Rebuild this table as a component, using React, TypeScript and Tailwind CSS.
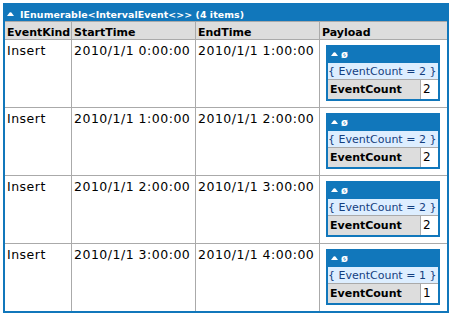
import React from "react";

type IntervalRow = { kind: string; start: string; end: string; count: number };

const rows: IntervalRow[] = [
  { kind: "Insert", start: "2010/1/1 0:00:00", end: "2010/1/1 1:00:00", count: 2 },
  { kind: "Insert", start: "2010/1/1 1:00:00", end: "2010/1/1 2:00:00", count: 2 },
  { kind: "Insert", start: "2010/1/1 2:00:00", end: "2010/1/1 3:00:00", count: 2 },
  { kind: "Insert", start: "2010/1/1 3:00:00", end: "2010/1/1 4:00:00", count: 1 },
];

const FONT = "font-['DejaVu_Sans',Verdana,sans-serif]";

function Caret() {
  return (
    <svg width="7" height="4" viewBox="0 0 7 4" className="block shrink-0">
      <path d="M0 4 L2.6 0.6 Q3.5 -0.2 4.4 0.6 L7 4 Z" fill="#ffffff" />
    </svg>
  );
}

function Payload({ count }: { count: number }) {
  return (
    <div className="mt-[2px] ml-[3px] w-[114px] border-2 border-[#1177bb] bg-white">
      <div className="flex h-[16px] items-start bg-[#1177bb] pl-[3px]">
        <div className="mt-[5px]">
          <Caret />
        </div>
        <span className="ml-[3px] mt-[3px] text-[10px] font-bold leading-[10px] text-white">ø</span>
      </div>
      <div className="h-[17px] whitespace-nowrap border-b border-[#aaaaaa] bg-[#ddeeff] text-[11px] leading-[17px] text-[#143f7f]">
        {"{ EventCount = " + count + " }"}
      </div>
      <div className="grid h-[19px] grid-cols-[93px_17px]">
        <div className="border-r border-[#aaaaaa] bg-[#dddddd] pl-[2px] text-[11px] font-bold leading-[19px] text-black">
          EventCount
        </div>
        <div className="pl-[2px] text-[12px] leading-[19px] text-black">{count}</div>
      </div>
    </div>
  );
}

export default function App() {
  const cols = "grid grid-cols-[67px_124px_124px_127px]";
  const headCell =
    "h-[17px] border-r border-[#aaaaaa] pl-[2px] pt-[4px] text-[11px] font-bold leading-[13px] text-black";
  const bodyCell =
    "h-[67px] border-r border-[#aaaaaa] pl-[2px] pt-[3px] text-[12.5px] tracking-[0.5px] leading-[15px] text-black whitespace-nowrap";

  return (
    <div className={`min-h-[320px] w-[452px] bg-white pt-[3px] pl-[3px] ${FONT}`}>
      <div className="w-[446px] border-2 border-[#1177bb]">
        <div className="flex h-[16px] items-start bg-[#1177bb] pl-[2px]">
          <div className="mt-[7px]">
            <Caret />
          </div>
          <span className="ml-[6px] mt-[5px] whitespace-nowrap text-[9.4px] font-bold leading-[10px] tracking-[0.1px] text-white">
            {"IEnumerable<IntervalEvent<>> (4 items)"}
          </span>
        </div>

        <div className={`${cols} border-t border-[#aaaaaa] bg-[#dddddd]`}>
          <div className={headCell}>EventKind</div>
          <div className={headCell}>StartTime</div>
          <div className={headCell}>EndTime</div>
          <div className={`${headCell} border-r-0`}>Payload</div>
        </div>

        {rows.map((r, i) => (
          <div key={i} className={`${cols} border-t border-[#aaaaaa]`}>
            <div className={bodyCell}>{r.kind}</div>
            <div className={bodyCell}>{r.start}</div>
            <div className={bodyCell}>{r.end}</div>
            <div className="h-[67px] pl-[3px] pt-[3px]">
              <Payload count={r.count} />
            </div>
          </div>
        ))}
      </div>
    </div>
  );
}
